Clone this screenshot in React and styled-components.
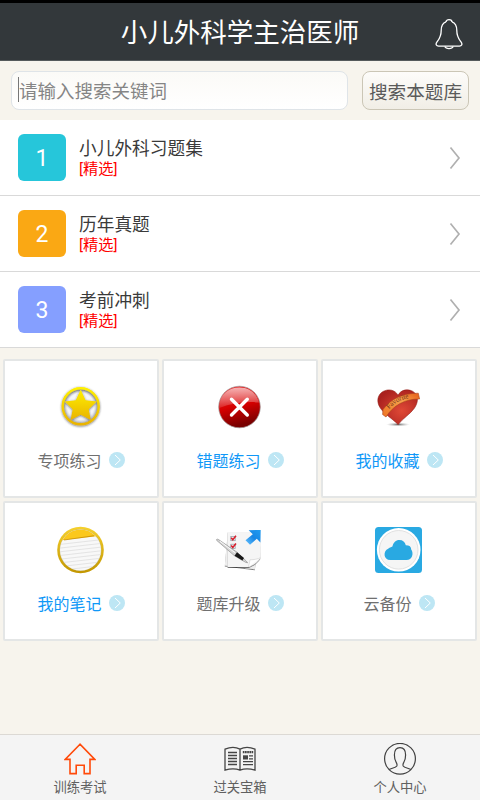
import styled, { createGlobalStyle } from "styled-components";

const chapters = [
  { number: 1, title: "小儿外科习题集", color: "#26c6da" },
  { number: 2, title: "历年真题", color: "#faa814" },
  { number: 3, title: "考前冲刺", color: "#859fff" },
];

const tools = [
  { label: "专项练习", icon: StarIcon },
  { label: "错题练习", icon: WrongIcon, active: true },
  { label: "我的收藏", icon: HeartIcon, active: true },
  { label: "我的笔记", icon: NoteIcon, active: true },
  { label: "题库升级", icon: UpgradeIcon },
  { label: "云备份", icon: CloudIcon },
];

const tabs = [
  { label: "训练考试", icon: HouseIcon },
  { label: "过关宝箱", icon: BookIcon },
  { label: "个人中心", icon: PersonIcon },
];

export default function App() {
  return (
    <>
      <GlobalStyle />
      <Page>
        <Header>
          <Title>小儿外科学主治医师</Title>
          <BellIcon />
        </Header>
        <SearchBar>
          <SearchField>
            <Caret />
            请输入搜索关键词
          </SearchField>
          <SearchButton>搜索本题库</SearchButton>
        </SearchBar>
        {chapters.map((chapter) => (
          <Row key={chapter.number}>
            <Badge $color={chapter.color}>{chapter.number}</Badge>
            <RowText>
              <RowTitle>{chapter.title}</RowTitle>
              <RowTag>[精选]</RowTag>
            </RowText>
            <svg width="12" height="24" viewBox="0 0 12 24" fill="none" stroke="#b0b0b0" strokeWidth="1.7">
              <path d="M1.5 1.5 L10 12 L1.5 22.5" />
            </svg>
          </Row>
        ))}
        <Grid>
          {tools.map(({ label, icon: Icon, active }) => (
            <Card key={label}>
              <Icon />
              <CardLabel $active={active}>
                <span>{label}</span>
                <svg width="16" height="16" viewBox="0 0 16 16" fill="none">
                  <circle cx="8" cy="8" r="8" fill="#bde6f4" />
                  <path d="M6 3 L11.3 8 L6 13" stroke="#fff" strokeWidth="1" />
                </svg>
              </CardLabel>
            </Card>
          ))}
        </Grid>
        <TabBar>
          {tabs.map(({ label, icon: Icon }) => (
            <Tab key={label}>
              <Icon />
              {label}
            </Tab>
          ))}
        </TabBar>
      </Page>
    </>
  );
}

function BellIcon() {
  return (
    <svg width="28" height="32" viewBox="0 0 28 32" fill="none" stroke="#fff" strokeWidth="1.3">
      <path d="M11 3.8 C6.8 5.2 6.2 9 6.2 12.5 C6.2 19 4.2 21 1.8 24.2 C0.3 26.5 1.5 28.2 3.5 28.2 H24.5 C26.5 28.2 27.7 26.5 26.2 24.2 C23.8 21 21.8 19 21.8 12.5 C21.8 9 21.2 5.2 17 3.8" />
      <path d="M11 4 C11 0.9 17 0.9 17 4" />
      <path d="M9.8 28.5 C11 31.3 17 31.3 18.2 28.5" />
    </svg>
  );
}

function StarIcon() {
  return (
    <CardIcon viewBox="0 0 48 48">
      <defs>
        <linearGradient id="gold" x1="0" y1="0" x2="0" y2="1">
          <stop offset="0" stopColor="#fff000" />
          <stop offset="1" stopColor="#e9b300" />
        </linearGradient>
        <radialGradient id="starShade">
          <stop offset="0" stopColor="#fff" />
          <stop offset="0.75" stopColor="#f4f5f8" />
          <stop offset="1" stopColor="#b4b6bb" />
        </radialGradient>
        <filter id="starShadow" x="-30%" y="-30%" width="160%" height="160%">
          <feDropShadow dx="0" dy="0.8" stdDeviation="1.1" floodColor="#222" floodOpacity="0.65" />
        </filter>
      </defs>
      <circle cx="23.7" cy="23.3" r="17.5" fill="url(#starShade)" />
      <g filter="url(#starShadow)">
        <circle cx="23.7" cy="23.3" r="18" fill="none" stroke="url(#gold)" strokeWidth="2.4" />
        <path
          d="M23.7 6.8 L28.6 17.2 L39.8 18.6 L31.7 26.2 L33.8 37 L23.7 31.7 L13.6 37 L15.7 26.2 L7.6 18.6 L18.8 17.2 Z"
          fill="url(#gold)"
        />
      </g>
    </CardIcon>
  );
}

function WrongIcon() {
  return (
    <CardIcon viewBox="0 0 48 48">
      <defs>
        <linearGradient id="red" x1="0" y1="0" x2="0.25" y2="1">
          <stop offset="0" stopColor="#e83032" />
          <stop offset="0.55" stopColor="#d60000" />
          <stop offset="1" stopColor="#790000" />
        </linearGradient>
        <linearGradient id="gloss" x1="0" y1="0" x2="0" y2="1">
          <stop offset="0" stopColor="#fff" stopOpacity="0.65" />
          <stop offset="1" stopColor="#fff" stopOpacity="0.12" />
        </linearGradient>
      </defs>
      <circle cx="23.5" cy="24" r="20.8" fill="url(#red)" stroke="#a09a9a" strokeWidth="0.7" />
      <path d="M3.3 25 C3 12 12 4.4 23.5 4.4 C34 4.4 41 11 43 19.5 C31 18.2 16 20 3.3 25 Z" fill="url(#gloss)" />
      <path d="M15.5 16.2 L31.3 32 M31.3 16.2 L15.5 32" stroke="#fff" strokeWidth="3.4" strokeLinecap="round" />
    </CardIcon>
  );
}

function HeartIcon() {
  return (
    <CardIcon viewBox="0 0 48 48">
      <defs>
        <radialGradient id="heart" cx="0.6" cy="0.6" r="0.65">
          <stop offset="0" stopColor="#df4936" />
          <stop offset="1" stopColor="#aa211e" />
        </radialGradient>
        <linearGradient id="ribbon" x1="0" y1="1" x2="1" y2="0">
          <stop offset="0" stopColor="#ee7423" />
          <stop offset="0.6" stopColor="#f6a04b" />
          <stop offset="1" stopColor="#e65c17" />
        </linearGradient>
        <radialGradient id="floor">
          <stop offset="0" stopColor="#666" />
          <stop offset="1" stopColor="#bbb" stopOpacity="0" />
        </radialGradient>
      </defs>
      <ellipse cx="23" cy="41.5" rx="12" ry="2" fill="url(#floor)" />
      <path
        d="M23 12.2 C20 6.5 13 5.7 8 8.5 C2 12 1.6 19 5 24.5 C9 31 16.5 35 23.2 41.5 C28 35 35 31.5 39.5 25 C44 18 43.4 11.5 37.5 8.2 C32 5.5 26 6.8 23 12.2 Z"
        fill="url(#heart)"
        stroke="#962019"
        strokeWidth="0.6"
      />
      <path
        d="M8 26.5 C16 16 27 10.2 43.3 10.2 L44.6 16 C30 15.8 18 22.5 11 34 L7.6 31.5 Z"
        fill="url(#ribbon)"
        stroke="#a9431c"
        strokeWidth="0.6"
      />
      <path id="ribbonLine" d="M14 26.2 C20 19.8 26 16.2 37 14.4" fill="none" />
      <RibbonText>
        <textPath href="#ribbonLine">Favorite</textPath>
      </RibbonText>
    </CardIcon>
  );
}

function NoteIcon() {
  return (
    <CardIcon viewBox="0 0 48 48">
      <defs>
        <linearGradient id="noteRing" x1="0" y1="0" x2="0" y2="1">
          <stop offset="0" stopColor="#f6d12d" />
          <stop offset="1" stopColor="#c29600" />
        </linearGradient>
        <clipPath id="noteClip">
          <circle cx="23.5" cy="24" r="20.5" />
        </clipPath>
      </defs>
      <circle cx="23.5" cy="24" r="23.3" fill="url(#noteRing)" />
      <circle cx="23.5" cy="24" r="20.9" fill="#c9bb80" />
      <g clipPath="url(#noteClip)">
        <rect width="48" height="48" y="1" fill="#f8f8f8" />
        <path d="M0 0 H48 V9.2 L7 14 L0 15 Z" fill="#fbc81d" />
        <path d="M7 14 L37 9.8" stroke="#bd8400" strokeWidth="0.7" />
        <g stroke="#dedede" strokeWidth="0.8">
          <path d="M2 18.5 L46 13.5 M2 22.2 L46 17.2 M2 25.9 L46 20.9 M2 29.6 L46 24.6 M2 33.3 L46 28.3 M2 37 L46 32 M2 40.7 L46 35.7 M8 43.8 L46 39.4" />
        </g>
      </g>
    </CardIcon>
  );
}

function UpgradeIcon() {
  return (
    <CardIcon viewBox="0 0 48 48">
      <defs>
        <linearGradient id="arrow" x1="0" y1="1" x2="1" y2="0">
          <stop offset="0" stopColor="#69c4ff" />
          <stop offset="0.5" stopColor="#1786e5" />
          <stop offset="1" stopColor="#219cf0" />
        </linearGradient>
        <filter id="paperShadow" x="-20%" y="-20%" width="140%" height="140%">
          <feDropShadow dx="0" dy="0.8" stdDeviation="0.7" floodColor="#222" floodOpacity="0.75" />
        </filter>
      </defs>
      <g filter="url(#paperShadow)">
        <path d="M11.5 9 L8.8 39.5 L38.8 43.3 L42.5 12 Z" fill="#eee" />
      </g>
      <g filter="url(#paperShadow)">
        <path d="M11.2 6 L44 6.5 L44.3 32 C42 36 37 39.5 32.5 41 L11.6 41 Z" fill="#f5f5f5" />
      </g>
      <path d="M32.5 41 L34 33.8 C38 33.8 42 33 44.3 31.7" fill="#fff" stroke="#c5c5c5" strokeWidth="0.5" />
      <g fill="#eef1f3" stroke="#8c99a2" strokeWidth="0.7">
        <rect x="14.8" y="10.5" width="4.4" height="4.2" />
        <rect x="14.8" y="18.2" width="4.4" height="4.2" />
      </g>
      <path d="M15.2 11.8 L16.8 13.8 L20 9.8 M15.2 19.5 L16.8 21.5 L20 17.5" fill="none" stroke="#d91f2c" strokeWidth="1.5" />
      <path d="M0.7 14.4 C0 13.2 1.4 12.7 2.6 13.6 L21 26.2 L30.4 35.2 L31.6 36.8 L29.6 36.3 L18.5 29.8 Z" fill="#d5d5d5" stroke="#858585" strokeWidth="0.6" />
      <path d="M21 26.2 L28 32 L26.4 34.4 L18.5 29.8 Z" fill="#191919" />
      <path d="M4 15.3 L19 26.7" stroke="#fff" strokeWidth="0.9" />
      <path d="M32.7 4.2 L44.7 4 L44.4 16.5 L40.8 12.8 L34 18.7 L29.5 14.2 L36.8 8.2 Z" fill="url(#arrow)" />
    </CardIcon>
  );
}

function CloudIcon() {
  return (
    <CardIcon viewBox="0 0 48 48">
      <rect x="0" y="1" width="47" height="46" rx="3.5" fill="#29a9e2" />
      <circle cx="23.7" cy="23.8" r="21.8" fill="#fff" />
      <circle cx="23.7" cy="23.8" r="19.3" fill="#f5f5f5" stroke="#dedede" strokeWidth="0.9" />
      <path
        d="M15.5 34 C8 34 8 24.7 13.2 22.7 C14.2 21.8 16 21.5 17.4 20.6 C18.3 16.5 21 14 24.2 14 C28 14 30 16 30.8 19.2 C34.5 19.2 36.2 20.7 36.2 23.5 C39 27.5 37.3 34 31.5 34 Z"
        fill="#29a9e2"
      />
    </CardIcon>
  );
}

function HouseIcon() {
  return (
    <TabIcon viewBox="0 0 32 32" stroke="#ff4a0a" strokeWidth="1.6">
      <path d="M16 1.2 L1.2 16.4 H6 V30.6 H12.2 V22.3 H20.2 V30.6 H26 V16.4 H30.8 Z" />
    </TabIcon>
  );
}

function BookIcon() {
  return (
    <TabIcon viewBox="0 0 32 32" stroke="#454545" strokeWidth="1.3">
      <path d="M16 6.2 C12 4.1 6 4.1 1 6.2 V27.2 C6 25.6 12 25.6 16 27.2 C20 25.6 26 25.6 31 27.2 V6.2 C26 4.1 20 4.1 16 6.2 Z V27.2" />
      <path d="M4 9.5 H13 M4 12.5 H13 M4 15.5 H13 M4 18.5 H13 M4 21.5 H13" />
      <path d="M18.8 9.2 H29.2" strokeWidth="2.2" strokeDasharray="1.7 0.5" />
      <path d="M19 14.4 H24" strokeWidth="4.2" />
      <path d="M25 12.9 H29 M25 15.8 H29 M19 18.7 H29 M19 21.7 H29" />
    </TabIcon>
  );
}

function PersonIcon() {
  return (
    <TabIcon viewBox="0 0 32 32" stroke="#414141" strokeWidth="1.2">
      <circle cx="16" cy="15.8" r="15.4" />
      <path d="M5 26.5 C7.5 25.2 12 24.8 12.8 23 C13.2 21.8 13 20.6 12.3 19.6 C11 17.7 10.4 14.8 10.4 12 C10.4 7 12.4 4.7 16 4.7 C19.6 4.7 21.6 7 21.6 12 C21.6 14.8 21 17.7 19.7 19.6 C19 20.6 18.8 21.8 19.2 23 C20 24.8 24.5 25.2 27 26.5" />
    </TabIcon>
  );
}

const GlobalStyle = createGlobalStyle`
  * {
    box-sizing: border-box;
  }

  body {
    margin: 0;
    font-family: Roboto, "Noto Sans CJK SC", sans-serif;
  }

  svg {
    display: block;
    flex-shrink: 0;
  }
`;

const Page = styled.div`
  width: 480px;
  height: 800px;
  display: flex;
  flex-direction: column;
  overflow: hidden;
  background: #f7f4ed;
`;

const Header = styled.header`
  height: 61px;
  flex-shrink: 0;
  display: flex;
  align-items: center;
  padding: 4px 17px 0 45px;
  border-top: 3px solid #000;
  border-bottom: 1px solid #555a5b;
  background: #33383b;
`;

const Title = styled.h1`
  flex: 1;
  margin: 0;
  padding-bottom: 2px;
  color: #fff;
  font-size: 26.5px;
  font-weight: 400;
  line-height: 36px;
  text-align: center;
`;

const SearchBar = styled.div`
  height: 59px;
  flex-shrink: 0;
  display: flex;
  justify-content: space-between;
  padding: 10px 11px 0;
`;

const SearchField = styled.div`
  width: 337px;
  height: 39px;
  display: flex;
  align-items: center;
  padding: 0 0 2px 6px;
  border: 1.5px solid #dfe4e8;
  border-radius: 8px;
  background: linear-gradient(#fbfaf7, #fff);
  color: #858585;
  font-size: 18.5px;
`;

const Caret = styled.span`
  width: 1px;
  height: 25px;
  background: #777;
`;

const SearchButton = styled.button`
  width: 107px;
  height: 39px;
  padding: 0 0 1px;
  border: 1.5px solid #cbc6b6;
  border-radius: 8px;
  background: linear-gradient(#fdfcfa, #f1eee6);
  color: #5a5a5a;
  font-family: inherit;
  font-size: 18.6px;
  white-space: nowrap;
`;

const Row = styled.div`
  height: 76px;
  flex-shrink: 0;
  display: flex;
  align-items: center;
  padding: 0 19px 0 18px;
  border-bottom: 1px solid #d9d9d9;
  background: #fff;
`;

const Badge = styled.div`
  width: 48px;
  height: 47px;
  display: flex;
  align-items: center;
  justify-content: center;
  border-radius: 6px;
  background: ${(props) => props.$color};
  color: #fff;
  font-size: 23px;
  padding-top: 2px;
`;

const RowText = styled.div`
  flex: 1;
  padding-left: 13px;
`;

const RowTitle = styled.div`
  color: #3a3a3a;
  font-size: 17.7px;
  line-height: 22px;
`;

const RowTag = styled.div`
  color: #f00;
  font-size: 15.2px;
  line-height: 18px;
`;

const Grid = styled.div`
  flex: 1;
  display: grid;
  grid-template-columns: repeat(3, 156px);
  grid-template-rows: 139px 140px;
  align-content: start;
  gap: 3px;
  padding: 11px 3px 0;
`;

const Card = styled.div`
  display: flex;
  flex-direction: column;
  align-items: center;
  padding-top: 22px;
  border: 2px solid #e4e6e6;
  border-radius: 2px;
  background: #fff;

  &:nth-child(n + 4) {
    padding-top: 23px;
  }
`;

const CardIcon = styled.svg`
  width: 48px;
  height: 48px;
  overflow: visible;
`;

const RibbonText = styled.text`
  fill: #713018;
  font-family: "Liberation Serif", serif;
  font-size: 7px;
`;

const CardLabel = styled.div`
  height: 24px;
  display: flex;
  align-items: center;
  gap: 7px;
  margin-top: 17px;
  color: ${(props) => (props.$active ? "#1098f7" : "#707070")};
  font-size: 16px;
  line-height: 24px;

  span {
    padding-top: 4px;
  }
`;

const TabBar = styled.nav`
  height: 66px;
  flex-shrink: 0;
  display: flex;
  border-top: 1px solid #dcd9d4;
  background: #f4f4f4;
`;

const Tab = styled.div`
  flex: 1;
  display: flex;
  flex-direction: column;
  align-items: center;
  gap: 4px;
  padding-top: 8px;
  color: #606060;
  font-size: 13.3px;
  line-height: 18px;
`;

const TabIcon = styled.svg`
  width: 32px;
  height: 32px;
  fill: none;
`;
